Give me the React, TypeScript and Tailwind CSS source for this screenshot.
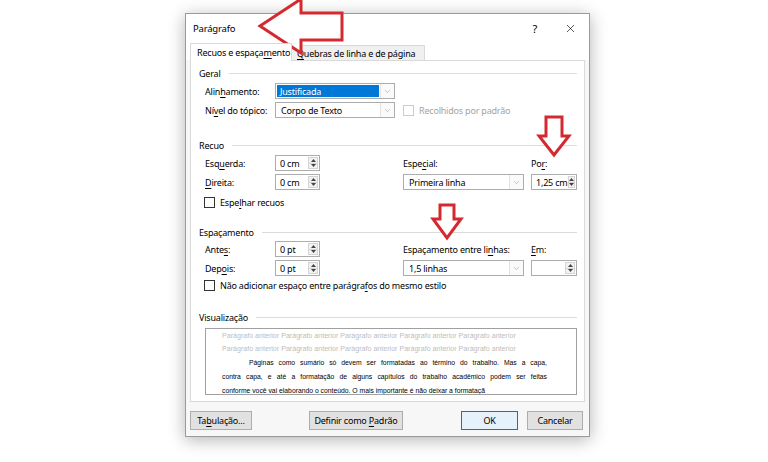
import type { ReactNode } from 'react'
import { X, ChevronDown } from 'lucide-react'

function U({ children }: { children: string }) {
  return <span className="underline underline-offset-[1.5px] decoration-[0.5px]">{children}</span>
}

function SectionTitle({ children }: { children: ReactNode }) {
  return (
    <div className="flex h-[14px] items-center">
      <span className="whitespace-nowrap">{children}</span>
      <div className="ml-[8px] h-px flex-1 bg-[#dcdcdc]" />
    </div>
  )
}

function Label({ children }: { children: ReactNode }) {
  return (
    <div className="flex h-[16px] items-center">
      <span className="whitespace-nowrap">{children}</span>
    </div>
  )
}

function Combo({ value, selected = false, width = 'w-[120px]' }: { value: string; selected?: boolean; width?: string }) {
  return (
    <div className={`flex h-[16px] ${width} border border-[#adadad] bg-white`}>
      <div className="flex flex-1 items-center p-[1px]">
        {selected ? (
          <span className="flex h-full w-full items-center bg-[#0078d7] pl-[3px] text-white">{value}</span>
        ) : (
          <span className="whitespace-nowrap pl-[4px]">{value}</span>
        )}
      </div>
      <div className="flex w-[14px] items-center justify-center border-l border-[#e3e3e3] bg-[#fafafa]">
        <ChevronDown size={9} strokeWidth={1.3} className="text-[#8a8a8a]" />
      </div>
    </div>
  )
}

function Spin({ value, width = 'w-[45px]' }: { value: string; width?: string }) {
  return (
    <div className={`flex h-[16px] ${width} border border-[#adadad] bg-white`}>
      <div className="flex flex-1 items-center whitespace-nowrap pl-[4px]">{value}</div>
      <div className="my-[1px] mr-[1px] flex w-[10px] flex-col border border-[#d4d4d4] bg-[#f2f2f2]">
        <div className="flex flex-1 items-center justify-center">
          <svg width="5" height="3" viewBox="0 0 5 3">
            <polygon points="0,3 2.5,0 5,3" fill="#444" />
          </svg>
        </div>
        <div className="h-px bg-[#d4d4d4]" />
        <div className="flex flex-1 items-center justify-center">
          <svg width="5" height="3" viewBox="0 0 5 3">
            <polygon points="0,0 2.5,3 5,0" fill="#444" />
          </svg>
        </div>
      </div>
    </div>
  )
}

function Check({ children, disabled = false }: { children: ReactNode; disabled?: boolean }) {
  return (
    <div className={`flex h-[12px] items-center gap-[5px] ${disabled ? 'text-[#a3a3a3]' : ''}`}>
      <div className={`h-[11px] w-[11px] shrink-0 border bg-white ${disabled ? 'border-[#cccccc]' : 'border-[#333333]'}`} />
      <span className="whitespace-nowrap">{children}</span>
    </div>
  )
}

function Btn({ children, width, primary = false }: { children: ReactNode; width: string; primary?: boolean }) {
  return (
    <div
      className={`flex h-[19px] ${width} items-center justify-center border ${
        primary ? 'border-[#0078d7] bg-[#e5f1fb]' : 'border-[#adadad] bg-[#e1e1e1]'
      }`}
    >
      <span className="whitespace-nowrap">{children}</span>
    </div>
  )
}

function DownArrow({ className, shaft, head, w, h }: { className: string; shaft: [number, number]; head: [number, number, number]; w: number; h: number }) {
  const [s0, s1] = shaft
  const [hy, h0, h1] = head
  const tip = (h0 + h1) / 2
  return (
    <svg className={`pointer-events-none absolute ${className}`} width={w} height={h} viewBox={`0 0 ${w} ${h}`}>
      <polygon
        points={`${s0},3 ${s1},3 ${s1},${hy} ${h1},${hy} ${tip},${h - 3} ${h0},${hy} ${s0},${hy}`}
        fill="white"
        stroke="#d42a2f"
        strokeWidth="3"
      />
    </svg>
  )
}

const grayLine = 'Parágrafo anterior Parágrafo anterior Parágrafo anterior Parágrafo anterior Parágrafo anterior'

export default function App() {
  return (
    <div className="relative h-[462px] w-[768px] overflow-hidden bg-white pt-[13px] font-['Noto_Sans',sans-serif] text-[9px] leading-none tracking-[-0.2px] text-black">
      <div className="ml-[185px] flex h-[424px] w-[405px] flex-col border border-[#9a9a9a] bg-[#f7f7f7] shadow-[0_3px_16px_rgba(0,0,0,0.3)]">
        {/* title bar */}
        <div className="flex h-[29px] items-center bg-white pl-[7px] text-[9.5px]">
          <span className="flex-1">Parágrafo</span>
          <span className="mr-[27px] text-[11px]">?</span>
          <X size={13} strokeWidth={1.2} className="mr-[12px]" />
        </div>

        {/* tabs */}
        <div className="flex h-[17px] items-end bg-white px-[4px]">
          <div className="relative z-10 -mb-px flex h-[18px] w-[102px] items-center border-x border-t border-[#d9d9d9] bg-white pl-[6px]">
            <span className="whitespace-nowrap">
              Recuos e espaça<U>m</U>ento
            </span>
          </div>
          <div className="flex h-[15px] w-[133px] items-center border-r border-t border-[#d9d9d9] bg-[#f0f0f0] pl-[5px]">
            <span className="whitespace-nowrap">
              <U>Q</U>uebras de linha e de página
            </span>
          </div>
        </div>

        {/* panel */}
        <div className="mx-[4px] flex h-[342px] flex-col border border-[#d9d9d9] bg-white pb-[6px] pl-[8px] pr-[7px] pt-[5px]">
          <SectionTitle>Geral</SectionTitle>
          <div className="mt-[3px] grid grid-cols-[70px_128px_128px_46px] gap-y-[3px] pl-[6px]">
            <Label>
              Alin<U>h</U>amento:
            </Label>
            <Combo value="Justificada" selected />
            <div />
            <div />
            <Label>
              Ní<U>v</U>el do tópico:
            </Label>
            <Combo value="Corpo de Texto" />
            <div className="flex items-center">
              <Check disabled>Recolhidos por padrão</Check>
            </div>
            <div />
          </div>

          <div className="mt-[20px]">
            <SectionTitle>Recuo</SectionTitle>
          </div>
          <div className="mt-[3px] grid grid-cols-[70px_128px_128px_46px] gap-y-[3px] pl-[6px]">
            <Label>
              Esq<U>u</U>erda:
            </Label>
            <Spin value="0 cm" />
            <Label>
              Espe<U>c</U>ial:
            </Label>
            <Label>
              Po<U>r</U>:
            </Label>
            <Label>
              <U>D</U>ireita:
            </Label>
            <Spin value="0 cm" />
            <Combo value="Primeira linha" width="w-[121px]" />
            <Spin value="1,25 cm" width="w-[46px]" />
          </div>
          <div className="mt-[6px] pl-[5px]">
            <Check>
              Espe<U>l</U>har recuos
            </Check>
          </div>

          <div className="mt-[17px]">
            <SectionTitle>Espaçamento</SectionTitle>
          </div>
          <div className="mt-[2px] grid grid-cols-[70px_128px_128px_46px] gap-y-[3px] pl-[6px]">
            <Label>
              Ante<U>s</U>:
            </Label>
            <Spin value="0 pt" />
            <Label>
              Espaçamento entre li<U>n</U>has:
            </Label>
            <Label>
              <U>E</U>m:
            </Label>
            <Label>
              Dep<U>o</U>is:
            </Label>
            <Spin value="0 pt" />
            <Combo value="1,5 linhas" width="w-[121px]" />
            <Spin value="" width="w-[46px]" />
          </div>
          <div className="mt-[3px] pl-[5px]">
            <Check>
              Não adicionar espaço entre parágra<U>f</U>os do mesmo estilo
            </Check>
          </div>

          <div className="mt-[19px]">
            <SectionTitle>Visualização</SectionTitle>
          </div>
          <div className="ml-[6px] mt-[4px] h-[67px] overflow-hidden border border-[#a0a0a0] bg-white pl-[16px] pr-[29px] pt-[1px] font-['Liberation_Sans',sans-serif] text-[6.8px] tracking-normal">
            <div className="whitespace-nowrap text-[7.1px] leading-[13px] text-[#bdbdbd]">{grayLine}</div>
            <div className="whitespace-nowrap text-[7.1px] leading-[13px] text-[#bdbdbd]">{grayLine}</div>
            <div className="text-justify leading-[14px] [text-align-last:justify]">
              <span className="inline-block w-[27px]" />
              Páginas como sumário só devem ser formatadas ao término do trabalho. Mas a capa,
            </div>
            <div className="text-justify leading-[14px] [text-align-last:justify]">
              contra capa, e até a formatação de alguns capítulos do trabalho acadêmico podem ser feitas
            </div>
            <div className="whitespace-nowrap leading-[14px]">
              conforme você vai elaborando o conteúdo. O mais importante é não deixar a formataçã
            </div>
          </div>
        </div>

        {/* buttons */}
        <div className="mt-[9px] flex px-[4px]">
          <Btn width="w-[62px]">
            Ta<U>b</U>ulação...
          </Btn>
          <div className="ml-[57px]">
            <Btn width="w-[94px]">
              Definir como <U>P</U>adrão
            </Btn>
          </div>
          <div className="ml-[58px]">
            <Btn width="w-[57px]" primary>
              OK
            </Btn>
          </div>
          <div className="ml-[9px]">
            <Btn width="w-[56px]">Cancelar</Btn>
          </div>
        </div>
      </div>

      {/* red annotation arrows */}
      <svg className="pointer-events-none absolute left-[255px] top-[-3px]" width="92" height="60" viewBox="0 0 92 60">
        <polygon points="5,29 46,2 46,16 87,16 87,43 46,43 46,56" fill="white" stroke="#d42a2f" strokeWidth="3" />
      </svg>
      <DownArrow className="left-[536px] top-[114px]" w={36} h={44} shaft={[10, 26]} head={[22, 3, 33]} />
      <DownArrow className="left-[430px] top-[202px]" w={34} h={39} shaft={[10, 24]} head={[17, 3, 31]} />
    </div>
  )
}
